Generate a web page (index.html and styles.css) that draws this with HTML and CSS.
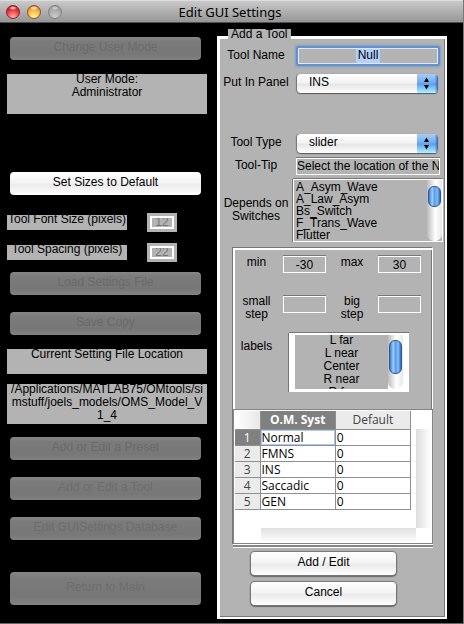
FILE: index.html
```html
<!DOCTYPE html>
<html lang="en">
<head>
<meta charset="utf-8">
<title>Edit GUI Settings</title>
<link rel="stylesheet" href="styles.css">
</head>
<body>
<div class="window">
  <header class="titlebar">
    <div class="lights">
      <button class="light red" type="button" aria-label="Close"></button>
      <button class="light amber" type="button" aria-label="Minimize"></button>
      <button class="light grey" type="button" aria-label="Zoom"></button>
    </div>
    <h1>Edit GUI Settings</h1>
  </header>
  <main>
    <section class="side">
      <button class="dim" type="button" disabled>Change User Mode</button>
      <div class="note tall"><p>User Mode:<br>Administrator</p></div>
      <button class="light-btn sizes" type="button">Set Sizes to Default</button>
      <div class="size-row">
        <label class="note" for="font"><span>Tool Font Size (pixels)</span></label>
        <span class="well"><input id="font" value="12" disabled></span>
      </div>
      <div class="size-row">
        <label class="note" for="space"><span>Tool Spacing (pixels)</span></label>
        <span class="well"><input id="space" value="22" disabled></span>
      </div>
      <button class="dim load" type="button" disabled>Load Settings File</button>
      <button class="dim save" type="button" disabled>Save Copy</button>
      <div class="note location"><p>Current Setting File Location</p></div>
      <div class="note tall path"><p>/Applications/MATLAB75/OMtools/simstuff/joels_models/OMS_Model_V<br>1_4</p></div>
      <button class="dim preset" type="button" disabled>Add or Edit a Preset</button>
      <button class="dim faint" type="button" disabled>Add or Edit a Tool</button>
      <button class="dim faint" type="button" disabled>Edit GUISettings Database</button>
      <button class="dim faint return" type="button" disabled>Return to Main</button>
    </section>

    <fieldset class="tool">
      <legend>Add a Tool</legend>
      <div class="row">
        <label for="name">Tool Name</label>
        <div class="focus"><span class="field"><input id="name" value="Null"></span></div>
      </div>
      <div class="row panel-row">
        <label for="panel">Put In Panel</label>
        <div class="popup">
          <select id="panel"><option>INS</option></select>
          <svg viewBox="0 0 21 19" aria-hidden="true"><path d="M7 8 9.500 3.500 12 8ZM7 11h5l-2.500 4.500Z"/></svg>
        </div>
      </div>
      <div class="row type-row">
        <label for="type">Tool Type</label>
        <div class="popup">
          <select id="type"><option>slider</option></select>
          <svg viewBox="0 0 21 19" aria-hidden="true"><path d="M7 8 9.500 3.500 12 8ZM7 11h5l-2.500 4.500Z"/></svg>
        </div>
      </div>
      <div class="row tip-row">
        <label for="tip">Tool-Tip</label>
        <input class="box" id="tip" value="Select the location of the Null">
      </div>
      <div class="row depends-row">
        <label for="depends">Depends on Switches</label>
        <div class="list">
          <select id="depends" multiple>
            <option>A_Asym_Wave</option><option>A_Law_Asym</option><option>Bs_Switch</option><option>F_Trans_Wave</option><option>Flutter</option>
          </select>
          <div class="scroll"><i></i></div>
        </div>
      </div>

      <div class="inner">
        <div class="limits">
          <label for="min">min</label><input class="box" id="min" value="-30">
          <label for="max">max</label><input class="box" id="max" value="30">
        </div>
        <div class="limits steps">
          <label for="small">small step</label><input class="box" id="small">
          <label for="big">big<br>step</label><input class="box" id="big">
        </div>
        <div class="labels">
          <label for="labels">labels</label>
          <div class="list centred">
            <select id="labels" multiple>
              <option>L far</option><option>L near</option><option>Center</option><option>R near</option><option>R far</option>
            </select>
            <div class="scroll"><i></i></div>
          </div>
        </div>
        <div class="sheet">
          <table>
            <thead><tr><th class="corner"></th><th class="on">O.M. Syst</th><th>Default</th></tr></thead>
            <tbody>
              <tr><th class="on">1</th><td class="cell-on">Normal</td><td>0</td></tr>
              <tr><th>2</th><td>FMNS</td><td>0</td></tr>
              <tr><th>3</th><td>INS</td><td>0</td></tr>
              <tr><th>4</th><td>Saccadic</td><td>0</td></tr>
              <tr><th>5</th><td>GEN</td><td>0</td></tr>
            </tbody>
          </table>
          <div class="track-v"></div>
          <div class="track-h"></div>
        </div>
      </div>

      <div class="actions">
        <button class="light-btn" type="button">Add / Edit</button>
        <button class="light-btn" type="button">Cancel</button>
      </div>
    </fieldset>
  </main>
</div>
</body>
</html>
```
FILE: styles.css
```css
* { box-sizing: border-box; }

body {
  margin: 0;
  background: #000;
  font: 12px/13px "Liberation Sans", Arial, sans-serif;
  color: #000;
}

button, input, select { font: inherit; color: inherit; margin: 0; padding: 0; min-width: 0; }
p { margin: 0; }

.window {
  min-height: 100vh;
  border-right: 1px solid #777;
  border-bottom: 1px solid #666;
}

/* Title bar */
.titlebar {
  display: grid;
  grid-template-columns: 66px 1fr 66px;
  align-items: center;
  height: 23px;
  padding-right: 3px;
  background: linear-gradient(#c9c9c9, #969696);
  border-top: 1px solid #ddd;
  border-bottom: 1px solid #515151;
}
.titlebar h1 {
  margin: 0;
  font: 13px/20px "Noto Sans", "Open Sans", sans-serif;
  text-align: center;
}
.lights { display: flex; gap: 7px; padding-left: 6px; }
.light {
  width: 14px;
  height: 14px;
  border: 1px solid #666;
  border-radius: 50%;
}
.red {
  border-color: #80262a;
  background: radial-gradient(ellipse 4px 2px at 50% 17%, #fff, transparent), radial-gradient(circle at 50% 90%, #ffb5ac, #ed2b31 60%, #a40e14);
}
.amber {
  border-color: #8c531d;
  background: radial-gradient(ellipse 4px 2px at 50% 17%, #fff, transparent), radial-gradient(circle at 50% 90%, #fff59b, #f9ae3e 60%, #b7611a);
}
.grey {
  border-color: #808080;
  background: radial-gradient(ellipse 4px 2px at 50% 17%, #ddd, transparent), radial-gradient(circle at 50% 90%, #ccc, #a9a9a9 60%, #8c8c8c);
}

main {
  display: grid;
  grid-template-columns: 200fr 230fr;
  gap: 10px;
  align-items: start;
  padding: 6px 16px 4px 7px;
}

/* Left column */
.side { display: flex; flex-direction: column; padding-top: 8px; }
.dim, .light-btn { height: 23px; padding-bottom: 2px; border: 0; border-radius: 4px; }
.side > button { margin: 0 6px 0 3px; }
.dim {
  background: linear-gradient(#868686, #7b7b7b 20%, #777 75%, #828282);
  color: #6a6a6a;
}
.side .faint { margin-top: 17px; color: #6d6d6d; }
.light-btn { background: linear-gradient(#fff, #f4f4f4 45%, #ebebeb 55%, #fff); }

.note { height: 15px; background: #b3b3b3; overflow: hidden; text-align: center; }
.note > * { display: block; margin-top: -1px; }
.tall { height: 40px; margin-top: 14px; }
.side .sizes { margin-top: 58px; margin-bottom: 18px; }
.size-row { display: flex; align-items: center; gap: 20px; height: 19px; margin-bottom: 11px; }
.size-row .note { flex: 0 0 60%; line-height: 11px; white-space: nowrap; }
.well { width: 30px; height: 19px; padding: 3px; background: #b3b3b3; }
.well input {
  display: block;
  width: 100%;
  height: 13px;
  border: 2px solid #fff;
  border-radius: 0;
  background: #b3b3b3;
  color: #777;
  text-align: center;
}
.side .load { margin-top: -1px; }
.side .save { margin-top: 17px; }
.location { height: 25px; margin-top: 14px; }
.path { margin-top: 10px; word-break: break-all; }
.side .preset { margin-top: 13px; }
.side .return { height: 33px; margin-top: 32px; }

/* Tool panel */
.tool {
  min-width: 0;
  margin: 0;
  padding: 0 5px 12px 0;
  border: solid #fff;
  border-width: 3px 2px 2px 3px;
  background: #b3b3b3;
  box-shadow: inset -1px -1px #777;
}
.tool legend { height: 17px; margin-left: 8px; padding: 0 3px; line-height: 11px; background: #b3b3b3; }
.row {
  display: grid;
  grid-template-columns: 72px 1fr;
  column-gap: 4px;
  align-items: center;
  height: 20px;
  text-align: center;
}
.row > label { padding-bottom: 2px; white-space: nowrap; }
.panel-row { margin-top: 7px; }
.type-row { margin-top: 40px; }
.tip-row { margin-top: 3px; }

.box {
  width: 100%;
  height: 17px;
  border: 1px solid #fff;
  border-radius: 0;
  background: #b3b3b3;
  box-shadow: 0 -1px #777;
  text-align: center;
}
#tip { text-align: left; }
.focus { border: 2px solid #5f92cf; border-radius: 2px; box-shadow: 0 0 2px 1px #7f9fc6; }
.field { display: block; border: 1px solid #dfe9f5; text-align: center; }
.field input { display: block; width: 24px; height: 14px; margin: 0 auto; padding-bottom: 2px; border: 0; background: #b2d2fd; outline: 0; text-align: center; }

.popup { position: relative; margin: 0 2px 0 1px; }
.popup select {
  display: block;
  width: 100%;
  height: 19px;
  padding: 0 24px 2px 12px;
  appearance: none;
  border: 0;
  border-radius: 4px;
  background: linear-gradient(#fff, #f3f3f3 45%, #e6e6e6 55%, #fff);
  box-shadow: 0 1px 1px #555, -1px 0 1px #777;
}
.popup svg {
  position: absolute;
  top: 0;
  right: 0;
  width: 21px;
  height: 19px;
  border-radius: 0 4px 4px 0;
  background: linear-gradient(90deg, transparent 85%, #2f65b5), linear-gradient(#a9cdf5, #6eaaf0 48%, #5a9fec 52%, #b3f1ff);
  pointer-events: none;
}

.depends-row { height: 64px; margin-top: 2px; }
.depends-row > label { padding: 0; white-space: normal; }
.list { display: flex; border: 1px solid #fff; box-shadow: 0 -1px #777, -1px 0 #777; }
.depends-row .list { height: 63px; margin: 1px -3px 0; }
.list select {
  flex: 1;
  height: 100%;
  border: 0;
  border-radius: 0;
  background: #b3b3b3;
  overflow: hidden;
  outline: 0;
  scrollbar-width: none;
}
.list option { height: 12px; min-height: 0; padding: 0 2px; line-height: 12px; }
.scroll { width: 15px; padding: 6px 1px 0; background: linear-gradient(90deg, #bbb, #fff 55%, #e8e8e8); border-radius: 0 0 7px 7px; }
.scroll i {
  display: block;
  height: 21px;
  border: 1px solid #2e5796;
  border-radius: 6px;
  background: linear-gradient(90deg, #3c79ce, #a3d0fb 30%, #5c9be9 48%, #7fbdf8 75%, #3169bd);
}

.inner {
  margin: 6px 7px 0 13px;
  border: solid #fff;
  border-width: 2px 1px 1px 2px;
  box-shadow: -1px -1px #777, inset -1px 0 #777;
}
.limits {
  display: grid;
  grid-template-columns: 43px 43px 42px 43px;
  column-gap: 5px;
  align-items: start;
  height: 40px;
  padding-top: 6px;
  text-align: center;
}
.limits .box { height: 17px; }
.steps label { width: 36px; justify-self: center; margin-top: -1px; }
.labels { display: grid; grid-template-columns: 43px 120px; column-gap: 11px; height: 79px; padding-top: 3px; text-align: center; }
.labels label { margin-top: 7px; }
.centred { height: 59px; padding: 1px 5px 2px; background: #fff; }
.centred option { height: 13px; line-height: 13px; text-align: center; }
.centred option:first-child { margin-top: -2px; }
.centred .scroll { width: 15px; padding-top: 5px; }
.centred .scroll i { height: 34px; }

/* Spreadsheet */
.sheet {
  display: grid;
  grid-template-columns: 1fr 15px;
  grid-template-rows: 117px 15px;
  margin: 0 -1px 0 -2px;
  padding: 1px 1px 0;
  background: #fff;
  border: 1px solid #858585;
  box-shadow: 0 1px #fff, 0 3px #858585, 0 4px #fff;
}
table {
  width: 176px;
  align-self: start;
  border-collapse: collapse;
  table-layout: fixed;
  font: 12px/15px "Open Sans", "Noto Sans", sans-serif;
}
th { height: 16px; padding: 0; border: 1px solid #909090; border-left: 0; background: #ebebeb; color: #444; font-weight: 400; }
thead th { height: 18px; border-top: 0; }
th.corner { width: 25px; background: linear-gradient(90deg, #fff, #e8e8e8); }
th.on { background: #808080; color: #fff; }
thead th.on { font-weight: 700; }
td { height: 16px; padding: 0 1px; border: 1px solid #909090; }
.cell-on { box-shadow: inset 0 0 0 1px #a9c9f5; }
.track-v { margin-top: 18px; background: linear-gradient(90deg, #ddd, #fff); }
.track-h { margin: 0 0 0 26px; background: linear-gradient(#e0e0e0, #fff); }

.actions { display: flex; flex-direction: column; gap: 7px; margin: 7px 44px 0 31px; }
.actions .light-btn { box-shadow: 0 0 1px 1px #777, 0 1px 1px 1px #666; }
```
